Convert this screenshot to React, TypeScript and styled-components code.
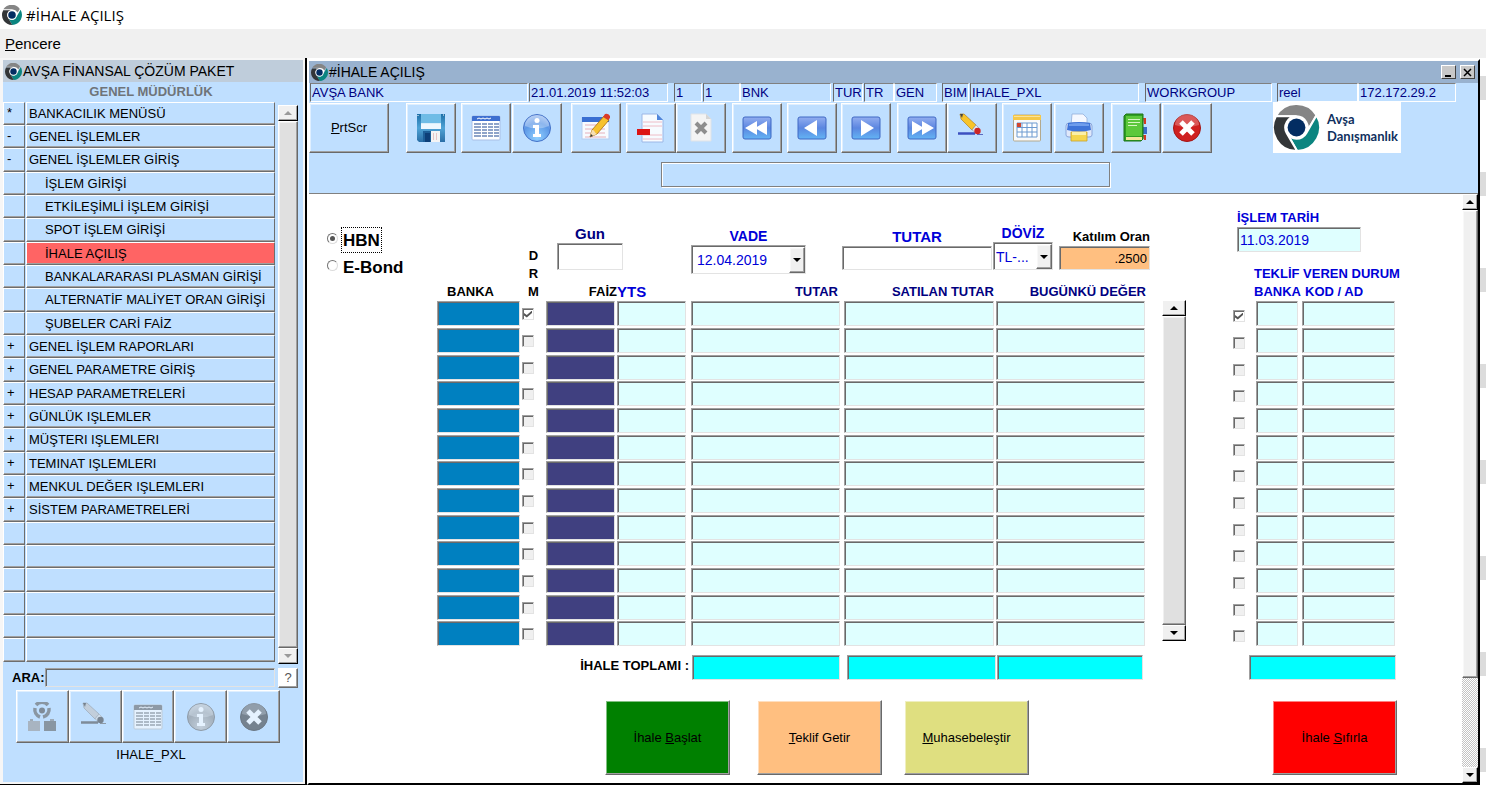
import React from "react";
import styled, { createGlobalStyle, css } from "styled-components";

const SKY = "#bfdfff";
const FACE = "#f0f0f0";
const AQUA = "#dfffff";
const NAVY = "#000080";
const BLUE = "#0000d8";

const GlobalStyle = createGlobalStyle`
  *, *::before, *::after { box-sizing: border-box; }
  body {
    margin: 0;
    background: #fff;
    color: #000;
    font-family: "Liberation Sans", Arial, sans-serif;
    font-size: 13px;
    line-height: 18px;
  }
  button, input, select { font: inherit; color: inherit; margin: 0; border-radius: 0; }
  svg { display: block; flex: none; }
`;

const raised = css`
  border: 1px solid;
  border-color: #fff #696969 #696969 #fff;
  box-shadow: inset -1px -1px 0 #a0a0a0, inset 1px 1px 0 rgba(255, 255, 255, 0.5);
`;
const sunken = css`
  border: 1px solid;
  border-color: #a0a0a0 #e3e3e3 #e3e3e3 #a0a0a0;
  box-shadow: inset 1px 1px 0 #696969;
`;

/* ---------- application frame ---------- */

const Shell = styled.div`
  display: flex;
  flex-direction: column;
  min-height: 100vh;
`;
const AppTitle = styled.header`
  display: flex;
  align-items: center;
  gap: 4px;
  height: 29px;
  padding-left: 2px;
  font-family: "Open Sans", "Noto Sans", sans-serif;
  font-size: 15px;
`;
const MenuBar = styled.nav`
  height: 29px;
  padding: 6px 5px;
  background: ${FACE};
  font-size: 15px;
`;
const MenuLink = styled.a`
  color: #000;
  text-decoration: none;
`;
const Desktop = styled.div`
  flex: 1;
  display: flex;
  padding: 0 6px 2px 0;
  background: repeating-linear-gradient(#fff 0 18px, #dcdcdc 18px 42px, #fff 42px 96px);
`;

/* ---------- menu window ---------- */

const SideWindow = styled.aside`
  flex: none;
  width: 307px;
  padding: 2px 2px 2px 3px;
  background: #f6f6f6;
  border: solid #000;
  border-width: 0 2px 1px 0;
`;
const SideInner = styled.div`
  height: 100%;
  background: ${SKY};
`;
const Caption = styled.h2<{ $color: string }>`
  display: flex;
  align-items: center;
  gap: 1px;
  height: 22px;
  margin: 0;
  padding: 0 3px 0 2px;
  background: ${(p) => p.$color};
  font-size: 14px;
  font-weight: 400;
`;
const Branch = styled.div`
  height: 20px;
  line-height: 20px;
  padding-right: 4px;
  text-align: center;
  font-weight: 700;
  color: #6f7479;
`;
const MenuArea = styled.div`
  display: flex;
  gap: 3px;
`;
const MenuList = styled.ul`
  width: 272px;
  margin: 0;
  padding: 0;
  list-style: none;
`;
const MenuRow = styled.li`
  display: grid;
  grid-template-columns: 22px 1fr;
  gap: 1px;
  height: 23px;
  &:nth-child(3n) { height: 24px; }
`;
const cell = css`
  border: 1px solid;
  border-color: #fff #6d6d6d #6d6d6d #fff;
  box-shadow: inset 0 -1px 0 #a0a0a0;
  background: ${SKY};
  line-height: 20px;
`;
const Sign = styled.span`
  ${cell}
  padding-left: 3px;
`;
const MenuItem = styled.button<{ $level: number; $active?: boolean }>`
  ${cell}
  padding: 0 0 0 ${(p) => (p.$level ? 18 : 2)}px;
  text-align: left;
  white-space: nowrap;
  ${(p) => p.$active && "background: #ff6464;"}
`;
const SideScroll = styled.div`
  padding-top: 3px;
`;
const SearchRow = styled.div`
  display: flex;
  align-items: center;
  gap: 3px;
  height: 21px;
  margin-top: 3px;
  padding-left: 9px;
`;
const SearchLabel = styled.label`
  display: flex;
  align-items: center;
  width: 263px;
  font-weight: 700;
`;
const SearchInput = styled.input`
  flex: 1;
  min-width: 0;
  height: 19px;
  background: ${SKY};
  ${sunken}
`;
const HelpButton = styled.button`
  ${raised}
  width: 20px;
  height: 20px;
  padding: 0;
  background: #fff;
  color: #555;
  line-height: 16px;
`;
const SideTools = styled.div`
  display: grid;
  grid-template-columns: repeat(5, 1fr);
  width: 264px;
  margin: 2px 0 0 13px;
`;
const SideTool = styled.button`
  ${raised}
  display: grid;
  place-items: center;
  height: 53px;
  padding: 0;
  background: ${SKY};
  svg { filter: grayscale(1); opacity: 0.6; }
`;
const ModuleName = styled.div`
  margin-top: 3px;
  padding-right: 4px;
  text-align: center;
`;

/* ---------- scroll bar ---------- */

const Bar = styled.div<{ $w: number; $h: string }>`
  display: flex;
  flex-direction: column;
  flex: none;
  width: ${(p) => p.$w}px;
  height: ${(p) => p.$h};
`;
const BarButton = styled.button`
  display: grid;
  place-items: center;
  height: 16px;
  padding: 0;
  background: ${FACE};
  border: 1px solid;
  border-color: #fff #000 #000 #fff;
  box-shadow: inset -1px -1px 0 #a0a0a0;
`;
const Thumb = styled.div<{ $size: number; $color: string }>`
  ${raised}
  flex: ${(p) => p.$size} 0 0;
  background: ${(p) => p.$color};
`;
const Trough = styled.div<{ $size: number }>`
  flex: ${(p) => p.$size} 0 0;
  background: repeating-conic-gradient(#c4c4c4 0 25%, #fff 0 50%) 0 0 / 2px 2px;
`;
function Scroller({ w, h, muted, share = 100, color = "#e0e0e0" }: { w: number; h: string; muted?: boolean; share?: number; color?: string }) {
  const fill = muted ? "#9a9a9a" : "#000";
  return (
    <Bar $w={w} $h={h}>
      <BarButton type="button" aria-label="Yukarı"><svg width="8" height="4" viewBox="0 0 8 4"><path d="M0 4 4 0l4 4z" fill={fill} /></svg></BarButton>
      <Thumb $size={share} $color={color} />
      {share < 100 && <Trough $size={100 - share} />}
      <BarButton type="button" aria-label="Aşağı"><svg width="8" height="4" viewBox="0 0 8 4"><path d="M0 0h8L4 4z" fill={fill} /></svg></BarButton>
    </Bar>
  );
}

/* ---------- main window ---------- */

const MainWindow = styled.main`
  flex: 1;
  min-width: 0;
  display: flex;
  flex-direction: column;
  margin: 1px 0 0;
  border: 2px solid;
  border-color: #fff #000 #000 #fff;
  background: ${SKY};
`;
const CaptionText = styled.span`
  flex: 1;
`;
const WinButton = styled.button`
  display: grid;
  place-items: center;
  width: 15px;
  height: 14px;
  margin-left: 3px;
  padding: 0;
  border: 1px solid;
  border-color: #fff #444 #444 #fff;
  background: #c8c8c8;
`;
const StatusLine = styled.div`
  display: flex;
  height: 19px;
  padding-left: 1px;
  background: ${SKY};
`;
const StatusCell = styled.div<{ $w: number; $gap?: number; $flat?: boolean }>`
  flex: none;
  width: ${(p) => p.$w}px;
  margin-left: ${(p) => p.$gap ?? 1}px;
  padding-left: 1px;
  line-height: 18px;
  color: ${NAVY};
  white-space: nowrap;
  border: 1px solid;
  border-color: #808080 #fff #fff ${(p) => (p.$flat ? "#fff" : "#696969")};
`;
const Toolbar = styled.div`
  display: flex;
  height: 51px;
  align-items: flex-end;
`;
const ToolButton = styled.button<{ $gap: number; $w?: number }>`
  ${raised}
  display: grid;
  place-items: center;
  flex: none;
  width: ${(p) => p.$w ?? 50}px;
  height: 50px;
  margin-left: ${(p) => p.$gap}px;
  padding: 0;
  background: ${SKY};
`;
const Brand = styled.div`
  display: flex;
  align-items: center;
  gap: 7px;
  flex: none;
  width: 128px;
  height: 51px;
  margin-left: 61px;
  background: #fff;
  color: #10305e;
  font-family: Lato, "Open Sans", sans-serif;
  font-size: 13px;
  font-weight: 700;
  line-height: 17px;
`;
const MessageRow = styled.div`
  height: 40px;
  padding: 9px 0 0 352px;
`;
const MessageBox = styled.div`
  width: 449px;
  height: 25px;
  border: 1px solid #808080;
  box-shadow: 1px 1px 0 #fff, inset 1px 1px 0 #fff;
`;
const FormArea = styled.div`
  flex: 1;
  display: flex;
  border-top: 1px solid #808080;
  background: #fff;
`;
const Form = styled.form`
  flex: 1;
  display: flex;
  align-items: flex-start;
  padding-bottom: 5px;
`;

const TypeGroup = styled.div`
  display: flex;
  flex-direction: column;
  align-items: flex-start;
  gap: 1px;
  flex: none;
  width: 128px;
  padding: 33px 0 0 18px;
  font-size: 17px;
  font-weight: 700;
`;
const RadioLabel = styled.label<{ $focus?: boolean }>`
  display: flex;
  gap: 3px;
  span {
    height: 26px;
    padding: 0 1px;
    line-height: 26px;
    border: 1px dotted ${(p) => (p.$focus ? "#000" : "transparent")};
  }
`;
const Radio = styled.input`
  appearance: none;
  display: grid;
  place-items: center;
  width: 11px;
  height: 11px;
  margin-top: 6px;
  border: 1px solid;
  border-color: #747474 #dcdcdc #dcdcdc #747474;
  border-radius: 50%;
  background: #fff;
  &:checked::before {
    content: "";
    width: 5px;
    height: 5px;
    border-radius: 50%;
    background: #555;
  }
`;
const Auction = styled.section`
  flex: none;
  width: 709px;
`;
const Grid = styled.table`
  width: 100%;
  table-layout: fixed;
  border-collapse: collapse;
  tbody tr { height: 27px; }
  tbody tr:nth-child(3n) { height: 26px; }
  th, td { padding: 0; vertical-align: top; }
  th { vertical-align: bottom; white-space: nowrap; line-height: 18px; }
`;
const Head = styled.th<{ $align?: string; $color?: string; $left?: number; $right?: number; $big?: boolean }>`
  && {
    padding-left: ${(p) => p.$left ?? 0}px;
    padding-right: ${(p) => p.$right ?? 0}px;
    text-align: ${(p) => p.$align ?? "right"};
    color: ${(p) => p.$color ?? NAVY};
    font-size: ${(p) => (p.$big ? 15 : 13)}px;
  }
`;
const Letter = styled.span`
  display: block;
`;
const Filters = styled.div`
  display: flex;
  align-items: flex-end;
  height: 89px;
  padding: 0 0 9px 11px;
`;
const Field = styled.div<{ $w: number; $gap?: number; $low?: boolean }>`
  flex: none;
  display: flex;
  flex-direction: column;
  width: ${(p) => p.$w}px;
  margin: 0 0 ${(p) => (p.$low ? 0 : 4)}px ${(p) => p.$gap ?? 0}px;
`;
const FieldLabel = styled.label<{ $size?: number; $color?: string; $align?: string }>`
  height: 18px;
  font-size: ${(p) => p.$size ?? 14}px;
  font-weight: 700;
  white-space: nowrap;
  color: ${(p) => p.$color ?? BLUE};
  text-align: ${(p) => p.$align ?? "center"};
`;
const TextBox = styled.input<{ $h?: number; $bg?: string; $left?: number; $right?: number; $align?: string }>`
  ${sunken}
  display: block;
  width: calc(100% - ${(p) => (p.$right ?? 0) + (p.$left ?? 0)}px);
  height: ${(p) => p.$h ?? 25}px;
  margin-left: ${(p) => p.$left ?? 0}px;
  padding: 0 2px;
  background: ${(p) => p.$bg ?? AQUA};
  text-align: ${(p) => p.$align ?? "left"};
`;
const DateBox = styled(TextBox)`
  color: ${BLUE};
  font-size: 14px;
`;
const Combo = styled.div<{ $h: number }>`
  ${sunken}
  display: flex;
  height: ${(p) => p.$h}px;
  padding: 1px 0 0 1px;
  position: relative;
  background: #fff;
`;
const Select = styled.select<{ $pad: number }>`
  appearance: none;
  width: 100%;
  padding: 0 16px 0 ${(p) => p.$pad}px;
  border: 0;
  background: transparent;
  color: ${BLUE};
  font-size: 14px;
`;
const ComboArrow = styled.span`
  ${raised}
  position: absolute;
  inset: 1px 0 0 auto;
  display: grid;
  place-items: center;
  width: 16px;
  background: ${FACE};
  pointer-events: none;
`;
const Tick = styled.input<{ $top: number }>`
  ${sunken}
  appearance: none;
  display: grid;
  place-items: center;
  width: 12px;
  height: 12px;
  margin: ${(p) => p.$top}px 0 0 1px;
  background: ${FACE};
  &:checked { background: #fff; }
  &:checked::before {
    content: "";
    width: 8px;
    height: 7px;
    background: #555;
    clip-path: polygon(0 35%, 35% 65%, 100% 0, 100% 35%, 35% 100%, 0 70%);
  }
`;
const TotalLabel = styled.td`
  && {
    padding: 9px 2px 0 0;
    text-align: right;
    font-weight: 700;
  }
`;
const TotalCell = styled.td<{ $left?: number }>`
  && { padding: 7px 0 0 ${(p) => p.$left ?? 1}px; }
`;
const Actions = styled.div<{ $left: number }>`
  display: flex;
  margin: 20px 0 0 ${(p) => p.$left}px;
`;
const Action = styled.button<{ $bg: string; $gap?: number }>`
  ${raised}
  flex: none;
  width: 125px;
  height: 75px;
  margin-left: ${(p) => p.$gap ?? 0}px;
  padding: 0;
  background: ${(p) => p.$bg};
`;
const GridScroll = styled.div`
  flex: none;
  margin: 106px 46px 0 16px;
`;
const Bidders = styled.section`
  flex: none;
  width: 165px;
  padding-top: 15px;
`;
const DateField = styled.div`
  display: flex;
  flex-direction: column;
  width: 124px;
  height: 56px;
  margin: 0 0 0 5px;
`;

/* ---------- drawings ---------- */

const seg = "M-20.2-11A23 23 0 0 1 19.6-12L9.5 5.5A11 11 0 0 0 0-11Z";
function Mark({ size }: { size: number }) {
  const small = size < 30;
  return (
    <svg width={size} height={size} viewBox="-23 -23 46 46">
      <path d="M-8-12H10L14-5 4 14H-3L-13-4z" fill="#fff" />
      <g stroke={small ? "none" : "#fff"} strokeWidth="2">
        <path d={small ? "M-20-13A23 23 0 0 1 18-14L13-6Q9-12 0-13Z" : seg} fill="#858585" />
        <path d={seg} fill="#0b8580" transform="rotate(120)" />
        <path d={seg} fill="#333638" transform="rotate(240)" />
      </g>
      <circle r="11" fill="#fff" />
      <circle r="8.7" fill="#032d62" />
    </svg>
  );
}

const Svg = ({ children, size = 30 }: { children: React.ReactNode; size?: number }) => (
  <svg width={size} height={size} viewBox="0 0 30 30">{children}</svg>
);
const Save = () => (
  <Svg>
    <defs><linearGradient id="sv" x1="0" y1="0" x2="0" y2="1"><stop offset="0" stopColor="#1e6fa8" /><stop offset=".5" stopColor="#4fa3d6" /><stop offset="1" stopColor="#2a6ea6" /></linearGradient></defs>
    <path d="M1 1h28v28H3l-2-2z" fill="url(#sv)" />
    <path d="M5 1h20v13H5z" fill="#d9eefb" /><path d="M5 1h20v9H5z" fill="#6fbce6" />
    <path d="M5 11h20v5H5z" fill="#eef8ff" />
    <path d="M7 18h17v11H7z" fill="#1d5f98" /><path d="M15 18h9v11h-9z" fill="#f4f4f4" />
    <path d="M9 20h5v9H9z" fill="#0d3f78" /><path d="M17 20h1v7h-1zM20 20h1v7h-1z" fill="#e7c6c6" />
    <path d="M2 2v1M27 2h1" stroke="#fff" />
  </Svg>
);
const Sheet = () => (
  <Svg>
    <rect x="1" y="3" width="28" height="24" rx="1" fill="#fff" stroke="#a9bfe6" />
    <path d="M1 4q0-1 1-1h26q1 0 1 1v4H1z" fill="#3e6fd0" />
    <path d="M6 6l2-1 2 1 2-1 2 1 2-1 2 1 2-1" stroke="#fff" fill="none" />
    <path d="M3 11h7M11 11h5M17 11h5M23 11h5M3 14h7M11 14h5M17 14h5M23 14h5M3 17h7M11 17h5M17 17h5M23 17h5M3 20h7M11 20h5M17 20h5M23 20h5M3 23h7M11 23h5M17 23h5M23 23h5" stroke="#6b86b8" strokeWidth="1.3" />
  </Svg>
);
const Info = () => (
  <Svg>
    <defs><radialGradient id="inf" cx=".5" cy=".85" r=".9"><stop offset="0" stopColor="#8fd0ff" /><stop offset=".6" stopColor="#5c97e6" /><stop offset="1" stopColor="#a9c4f2" /></radialGradient></defs>
    <circle cx="15" cy="15" r="13.5" fill="url(#inf)" stroke="#4472c8" />
    <path d="M3 13a12 11 0 0 1 24 0q-12 5-24 0z" fill="#fff" opacity=".3" />
    <circle cx="15" cy="7.5" r="2.5" fill="#fff" />
    <path d="M11 12h6v9h2v3h-8v-3h2v-6h-2z" fill="#fff" />
  </Svg>
);
const Edit = () => (
  <Svg>
    <rect x="1" y="5" width="27" height="21" fill="#f8fbff" stroke="#b5cdf0" />
    <path d="M1 4h27v5H1z" fill="#3a6fd2" />
    <path d="M4 12h20M4 16h20M4 20h20M4 24h21" stroke="#e6b0bb" />
    <path d="M9 24l2-7L23 3l5 4-12 14z" fill="#f7c22e" stroke="#a86d10" strokeWidth=".8" />
    <path d="M9 24l2-7 2 .5 1 2 2 1.5z" fill="#f6dfb4" /><path d="M9 24l1-3 2 2z" fill="#333" />
    <path d="M22 4l2-3q3-1 5 2l0 2-2 2z" fill="#d93a2a" />
  </Svg>
);
const Remove = () => (
  <Svg>
    <path d="M6 1h15l6 6v22H6z" fill="#f7fbff" stroke="#9cb7e6" />
    <path d="M21 1v6h6z" fill="#4f86dc" />
    <path d="M7 9h19M7 13h19M7 22h19M7 26h19" stroke="#eebcc6" /><path d="M1 16h13v6H1z" fill="#dc1414" />
  </Svg>
);
const Cancel = () => (
  <Svg><path d="M5 1h15l5 5v22H5z" fill="#f4f4f4" stroke="#dfe3e8" /><path d="M20 1v5h5z" fill="#d5d5d5" /><path d="M10 10l10 10M20 10L10 20" stroke="#8e8e8e" strokeWidth="4" /></Svg>
);
const Nav = ({ d }: { d: string }) => (
  <Svg>
    <defs><linearGradient id="nv" x1="0" y1="0" x2="0" y2="1"><stop offset="0" stopColor="#93aef0" /><stop offset=".5" stopColor="#5b86e0" /><stop offset="1" stopColor="#63b4f4" /></linearGradient></defs>
    <rect x="1" y="4" width="28" height="22" rx="2" fill="url(#nv)" stroke="#3f68c4" />
    <path d={d} fill="#fff" />
  </Svg>
);
const Pencil = ({ dull }: { dull?: boolean }) => (
  <Svg>
    <path d="M1 20.500h17" stroke="#3c50c0" strokeWidth="2.500" /><path d="M20 21.500h6" stroke="#5a6ac0" />
    <path d="M3 1l4 0 12 11-4 5L4 6z" fill="#f8c42a" stroke="#a77413" strokeWidth=".6" />
    <path d="M3 1h3L5 5z" fill="#444" />
    <path d="M15 17l4-5 3 3-4 4z" fill={dull ? "#ddd" : "#e6e9f2"} stroke="#8b90a0" strokeWidth=".6" />
    <circle cx="20.500" cy="18" r="3.200" fill="#cc2626" />
  </Svg>
);
const Calendar = () => (
  <Svg>
    <rect x="1.500" y="2" width="27" height="26" rx="1" fill="#fafafa" stroke="#b3a98e" />
    <path d="M1 2h28v5H1z" fill="#f5c84a" /><path d="M2 3h26v1H2z" fill="#fbe29a" />
    <path d="M5 10h20v14H5z" fill="#fff" />
    <path d="M5 10h20v14H5zM5 14.500h20M5 19h20M10 10v14M15 10v14M20 10v14" stroke="#6c9ad0" fill="none" />
    <path d="M5 10h4v4H5z" fill="#d2462e" />
  </Svg>
);
const Printer = () => (
  <Svg>
    <path d="M8 1h11l4 4v8H7z" fill="#f5f8ff" stroke="#93add9" strokeWidth=".8" />
    <path d="M2 13q0-3 3-3h20q3 0 3 3v9q0 2-3 2H5q-3 0-3-2z" fill="#dfe8fa" stroke="#8ba6da" />
    <path d="M4 10q11-2 22 0l1 7q-12 3-24 0z" fill="#3f74d8" /><path d="M5 11q10-2 20 0v2H5z" fill="#6f9dec" />
    <path d="M7 19h16v9H7z" fill="#f5d64e" stroke="#c9a128" strokeWidth=".8" /><path d="M8 19h14v3H8z" fill="#fbf0a8" />
  </Svg>
);
const Book = () => (
  <Svg>
    <path d="M22 5h3v6h-2zM22 22h3v5h-2z" fill="#d43a24" /><path d="M22 14h4v7h-4z" fill="#3a6cc8" />
    <path d="M3 3l2-2h17v25l-2 2H3z" fill="#2f9e22" stroke="#1f7417" />
    <path d="M5 3h16v20H5z" fill="#5cc83c" /><path d="M7 6h12v1H7zM7 9h12v1H7zM7 12h9v1H7z" fill="#d8f5c4" />
    <path d="M5 24h16v3H5z" fill="#f4e69a" />
  </Svg>
);
const Close = () => (
  <Svg>
    <circle cx="15" cy="15" r="13.500" fill="#cf2020" stroke="#a31515" />
    <path d="M3 12a12 11 0 0 1 24 0q-12 4-24 0z" fill="#fff" opacity=".25" />
    <path d="M9 9l12 12M21 9L9 21" stroke="#fff" strokeWidth="5" />
  </Svg>
);
const Tree = () => (
  <Svg>
    <g fill="none" stroke="#666" strokeWidth="3.500"><path d="M9 3a8 8 0 0 1 12 0" /><path d="M22 6a8 8 0 0 1-6 9" /><path d="M8 6a8 8 0 0 0 5 9" /></g>
    <circle cx="15" cy="8.500" r="3" fill="#555" />
    <path d="M1 19h12v10H1z" fill="#999" /><path d="M17 19h12v10H17z" fill="#666" /><path d="M3 17h3v2H3zM23 17h4v2h-4z" fill="#888" />
  </Svg>
);
const Drop = () => <svg width="8" height="4" viewBox="0 0 8 4"><path d="M0 0h8L4 4z" fill="#000" /></svg>;

/* ---------- data ---------- */

type Entry = [string, string, number?];
const entries: Entry[] = [
  ["*", "BANKACILIK MENÜSÜ"], ["-", "GENEL İŞLEMLER"], ["-", "GENEL İŞLEMLER GİRİŞ"],
  ["", "İŞLEM GİRİŞİ", 1], ["", "ETKİLEŞİMLİ İŞLEM GİRİŞİ", 1], ["", "SPOT İŞLEM GİRİŞİ", 1], ["", "İHALE AÇILIŞ", 1],
  ["", "BANKALARARASI PLASMAN GİRİŞİ", 1], ["", "ALTERNATİF MALİYET ORAN GİRİŞİ", 1], ["", "ŞUBELER CARİ FAİZ", 1],
  ["+", "GENEL İŞLEM RAPORLARI"], ["+", "GENEL PARAMETRE GİRİŞ"], ["+", "HESAP PARAMETRELERİ"], ["+", "GÜNLÜK IŞLEMLER"],
  ["+", "MÜŞTERI IŞLEMLERI"], ["+", "TEMINAT IŞLEMLERI"], ["+", "MENKUL DEĞER IŞLEMLERI"], ["+", "SİSTEM PARAMETRELERİ"],
  ["", ""], ["", ""], ["", ""], ["", ""], ["", ""], ["", ""],
];
const status: { t: string; w: number; gap?: number; flat?: boolean }[] = [
  { t: "AVŞA BANK", w: 218, gap: 0 }, { t: "21.01.2019 11:52:03", w: 139 },
  { t: "1", w: 28, gap: 6 }, { t: "1", w: 37 }, { t: "BNK", w: 91, gap: 0, flat: true },
  { t: "TUR", w: 30, gap: 2 }, { t: "TR", w: 30 }, { t: "GEN", w: 43, gap: 0, flat: true },
  { t: "BIM", w: 27, gap: 5 }, { t: "IHALE_PXL", w: 169 },
  { t: "WORKGROUP", w: 127, gap: 6 }, { t: "reel", w: 81, gap: 5 }, { t: "172.172.29.2", w: 98, gap: 0, flat: true },
];
const tools: { label: string; gap: number; icon: React.ReactNode }[] = [
  { label: "Kaydet", gap: 17, icon: <Save /> },
  { label: "Liste", gap: 5, icon: <Sheet /> },
  { label: "Bilgi", gap: 1, icon: <Info /> },
  { label: "Düzenle", gap: 9, icon: <Edit /> },
  { label: "Satır sil", gap: 5, icon: <Remove /> },
  { label: "Vazgeç", gap: 0, icon: <Cancel /> },
  { label: "İlk", gap: 6, icon: <Nav d="M3 15L15 8v14zM13 15l12-7v14z" /> },
  { label: "Önceki", gap: 5, icon: <Nav d="M7 15l13-8v16z" /> },
  { label: "Sonraki", gap: 4, icon: <Nav d="M23 15L10 7v16z" /> },
  { label: "Son", gap: 6, icon: <Nav d="M27 15L15 8v14zM17 15L5 8v14z" /> },
  { label: "Temizle", gap: 0, icon: <Pencil /> },
  { label: "Takvim", gap: 5, icon: <Calendar /> },
  { label: "Yazdır", gap: 2, icon: <Printer /> },
  { label: "Defter", gap: 7, icon: <Book /> },
  { label: "Çıkış", gap: 1, icon: <Close /> },
];
const rows = Array.from({ length: 13 }, (_, i) => i);

export default function App() {
  return (
    <Shell>
      <GlobalStyle />
      <AppTitle><Mark size={20} />#İHALE AÇILIŞ</AppTitle>
      <MenuBar><MenuLink href="#pencere"><u>P</u>encere</MenuLink></MenuBar>
      <Desktop>
        <SideWindow>
          <SideInner>
            <Caption $color="#bfcddb"><Mark size={17} />AVŞA FİNANSAL ÇÖZÜM PAKET</Caption>
            <Branch>GENEL MÜDÜRLÜK</Branch>
            <MenuArea>
              <MenuList>
                {entries.map(([sign, text, level], i) => (
                  <MenuRow key={i}>
                    <Sign>{sign}</Sign>
                    <MenuItem $level={level ?? 0} $active={i === 6}>{text}</MenuItem>
                  </MenuRow>
                ))}
              </MenuList>
              <SideScroll><Scroller w={20} h="559px" muted /></SideScroll>
            </MenuArea>
            <SearchRow>
              <SearchLabel>ARA:<SearchInput type="text" /></SearchLabel>
              <HelpButton>?</HelpButton>
            </SearchRow>
            <SideTools>
              <SideTool aria-label="Menü"><Tree /></SideTool>
              <SideTool aria-label="Temizle"><Pencil dull /></SideTool>
              <SideTool aria-label="Liste"><Sheet /></SideTool>
              <SideTool aria-label="Bilgi"><Info /></SideTool>
              <SideTool aria-label="Çıkış"><Close /></SideTool>
            </SideTools>
            <ModuleName>IHALE_PXL</ModuleName>
          </SideInner>
        </SideWindow>

        <MainWindow>
          <Caption $color="#99b2cf">
            <Mark size={17} /><CaptionText>#İHALE AÇILIŞ</CaptionText>
            <WinButton aria-label="Küçült"><svg width="9" height="9"><path d="M1 7h6v2H1z" /></svg></WinButton>
            <WinButton aria-label="Kapat"><svg width="9" height="9"><path d="M1 1l7 7M8 1L1 8" stroke="#000" strokeWidth="1.5" /></svg></WinButton>
          </Caption>
          <StatusLine>
            {status.map((s, i) => <StatusCell key={i} $w={s.w} $gap={s.gap} $flat={s.flat}>{s.t}</StatusCell>)}
          </StatusLine>
          <Toolbar>
            <ToolButton $gap={0} $w={80}><span><u>P</u>rtScr</span></ToolButton>
            {tools.map((t) => <ToolButton key={t.label} $gap={t.gap} aria-label={t.label}>{t.icon}</ToolButton>)}
            <Brand><Mark size={47} /><span>Avşa<br />Danışmanlık</span></Brand>
          </Toolbar>
          <MessageRow><MessageBox /></MessageRow>

          <FormArea>
            <Form onSubmit={(e) => e.preventDefault()}>
              <TypeGroup role="radiogroup" aria-label="Tür">
                <RadioLabel $focus><Radio type="radio" name="kind" defaultChecked /><span>HBN</span></RadioLabel>
                <RadioLabel><Radio type="radio" name="kind" /><span>E-Bond</span></RadioLabel>
              </TypeGroup>

              <Auction>
                <Grid>
                  <colgroup>
                    {[84, 25, 71, 74, 153, 152, 150].map((w, i) => <col key={i} width={w} />)}
                  </colgroup>
                  <thead>
                    <tr>
                      <Head rowSpan={2} $align="left" $left={10} $color="#000">BANKA</Head>
                      <Head rowSpan={2} $align="center" $color="#000"><Letter>D</Letter><Letter>R</Letter><Letter>M</Letter></Head>
                      <td colSpan={5}>
                        <Filters>
                          <Field $w={66}>
                            <FieldLabel htmlFor="gun" $size={15} $color={NAVY}>Gun</FieldLabel>
                            <TextBox id="gun" $h={27} $bg="#fff" />
                          </Field>
                          <Field $w={115} $gap={68} $low>
                            <FieldLabel htmlFor="vade">VADE</FieldLabel>
                            <Combo $h={29}>
                              <Select id="vade" $pad={4}><option>12.04.2019</option></Select>
                              <ComboArrow><Drop /></ComboArrow>
                            </Combo>
                          </Field>
                          <Field $w={150} $gap={36}>
                            <FieldLabel htmlFor="tutar" $size={15}>TUTAR</FieldLabel>
                            <TextBox id="tutar" $h={24} $bg="#fff" />
                          </Field>
                          <Field $w={60} $gap={1}>
                            <FieldLabel htmlFor="doviz">DÖVİZ</FieldLabel>
                            <Combo $h={28}>
                              <Select id="doviz" $pad={1}><option>TL-...</option></Select>
                              <ComboArrow><Drop /></ComboArrow>
                            </Combo>
                          </Field>
                          <Field $w={91} $gap={6}>
                            <FieldLabel htmlFor="oran" $size={13} $color="#000" $align="right">Katılım Oran</FieldLabel>
                            <TextBox id="oran" $h={24} $bg="#ffbf80" $align="right" defaultValue=".2500" />
                          </Field>
                        </Filters>
                      </td>
                    </tr>
                    <tr>
                      <Head $color="#000">FAİZ</Head>
                      <Head $align="left" $color={BLUE} $big>YTS</Head>
                      <Head $right={6}>TUTAR</Head>
                      <Head $right={2}>SATILAN TUTAR</Head>
                      <Head>BUGÜNKÜ DEĞER</Head>
                    </tr>
                  </thead>
                  <tbody>
                    {rows.map((r) => (
                      <tr key={r}>
                        <td><TextBox aria-label="Banka" $bg="#0080c0" $right={1} /></td>
                        <td><Tick type="checkbox" aria-label="Durum" $top={7} defaultChecked={r === 0} /></td>
                        <td><TextBox aria-label="Faiz" $bg="#404080" $right={2} /></td>
                        <td><TextBox aria-label="Yts" $right={5} /></td>
                        <td><TextBox aria-label="Tutar" $right={4} /></td>
                        <td><TextBox aria-label="Satılan tutar" $right={2} /></td>
                        <td><TextBox aria-label="Bugünkü değer" $right={1} /></td>
                      </tr>
                    ))}
                  </tbody>
                  <tfoot>
                    <tr>
                      <TotalLabel colSpan={4}>İHALE TOPLAMI :</TotalLabel>
                      <TotalCell><TextBox aria-label="Toplam tutar" $bg="#00ffff" $right={4} readOnly /></TotalCell>
                      <TotalCell $left={3}><TextBox aria-label="Toplam satılan" $bg="#00ffff" readOnly /></TotalCell>
                      <TotalCell><TextBox aria-label="Toplam değer" $bg="#00ffff" $right={3} readOnly /></TotalCell>
                    </tr>
                  </tfoot>
                </Grid>
                <Actions $left={168}>
                  <Action type="button" $bg="#008000">İhale <u>B</u>aşlat</Action>
                  <Action type="button" $bg="#ffbf80" $gap={27}><u>T</u>eklif Getir</Action>
                  <Action type="button" $bg="#dfdf80" $gap={22}><u>M</u>uhasebeleştir</Action>
                </Actions>
              </Auction>

              <GridScroll><Scroller w={24} h="341px" /></GridScroll>

              <Bidders>
                <DateField>
                  <FieldLabel htmlFor="islem" $size={13} $align="left">İŞLEM TARİH</FieldLabel>
                  <DateBox id="islem" defaultValue="11.03.2019" />
                </DateField>
                <Grid>
                  <colgroup><col width={22} /><col width={48} /><col width={95} /></colgroup>
                  <thead>
                    <tr>
                      <td />
                      <Head colSpan={2} $align="left" $color={BLUE}>TEKLİF VEREN DURUM</Head>
                    </tr>
                    <tr>
                      <td />
                      <Head $align="left" $color={BLUE}>BANKA</Head>
                      <Head $align="left" $left={3} $color={BLUE}>KOD / AD</Head>
                    </tr>
                  </thead>
                  <tbody>
                    {rows.map((r) => (
                      <tr key={r}>
                        <td><Tick type="checkbox" aria-label="Teklif durumu" $top={9} defaultChecked={r === 0} /></td>
                        <td><TextBox aria-label="Banka kodu" $left={2} $right={4} /></td>
                        <td><TextBox aria-label="Banka adı" $right={2} /></td>
                      </tr>
                    ))}
                  </tbody>
                  <tfoot>
                    <tr><TotalCell colSpan={3} $left={17}><TextBox aria-label="Teklif toplamı" $bg="#00ffff" $right={1} readOnly /></TotalCell></tr>
                  </tfoot>
                </Grid>
                <Actions $left={40}>
                  <Action type="button" $bg="#ff0000">İhale <u>S</u>ıfırla</Action>
                </Actions>
              </Bidders>
            </Form>
            <Scroller w={16} h="auto" share={84} color={FACE} />
          </FormArea>
        </MainWindow>
      </Desktop>
    </Shell>
  );
}
